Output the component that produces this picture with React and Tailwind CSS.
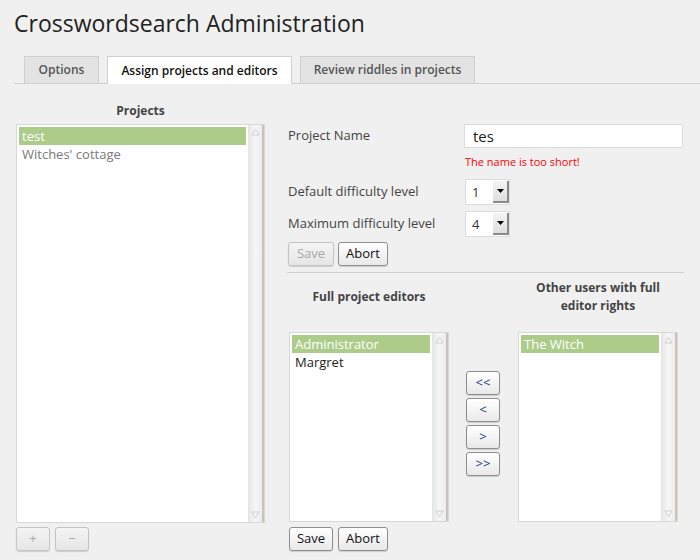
import React from "react";

const font = { fontFamily: '"Open Sans", "Liberation Sans", sans-serif' };

function Scrollbar() {
  return (
    <div className="flex w-[16px] shrink-0 flex-col items-center justify-between border-l border-[#e4e4e4] border-r-2 border-r-[#c8c4bc] bg-gradient-to-r from-[#e8e8e8] via-[#f6f6f6] to-[#ececec] py-[3px]">
      <svg width="9" height="8" viewBox="0 0 9 8"><path d="M4.5 1 L8 7 L1 7 Z" fill="none" stroke="#d0d0d0" strokeWidth="1" /></svg>
      <svg width="9" height="8" viewBox="0 0 9 8"><path d="M1 1 L8 1 L4.5 7 Z" fill="none" stroke="#d0d0d0" strokeWidth="1" /></svg>
    </div>
  );
}

function ListBox({ items, className }) {
  return (
    <div className={"flex border border-[#d8d8d8] bg-white " + className}>
      <div className="flex-1 p-[2px]">
        {items.map((it, i) => (
          <div
            key={i}
            className={
              "h-[18px] pl-[3px] text-[13px] leading-[18px] " +
              (it.sel ? "bg-[#adcc8a] text-white" : it.gray ? "text-[#7a7a7a]" : "text-[#222]")
            }
          >
            {it.t}
          </div>
        ))}
      </div>
      <Scrollbar />
    </div>
  );
}

function Btn({ children, disabled, className = "" }) {
  return (
    <div
      className={
        "flex h-[24px] items-center justify-center rounded-[3px] border text-[13px] shadow-[0_1px_1px_rgba(0,0,0,0.15)] " +
        (disabled
          ? "border-[#c4c4c4] bg-gradient-to-b from-[#f4f4f4] to-[#e6e6e6] text-[#a8a8a8]"
          : "border-[#8e8e8e] bg-gradient-to-b from-white to-[#e9e9e9] text-[#111]") +
        " " +
        className
      }
    >
      {children}
    </div>
  );
}

function Select({ value }) {
  return (
    <div className="flex h-[26px] w-[45px] border border-[#dcdcdc] bg-white">
      <div className="flex-1 pl-[6px] text-[13px] leading-[24px] text-[#333]">{value}</div>
      <div className="mt-[1px] flex h-[22px] w-[16px] items-center justify-center border-r-2 border-b-2 border-[#8a8a8a] bg-gradient-to-b from-[#f4f4f4] to-[#dedede]">
        <svg width="7" height="4" viewBox="0 0 7 4"><path d="M0 0 L7 0 L3.5 4 Z" fill="#000" /></svg>
      </div>
    </div>
  );
}

export default function App() {
  return (
    <div className="h-[560px] w-[700px] overflow-hidden bg-[#f0f0f0] text-[#333]" style={font}>
      <div className="pl-[14px] pt-[6px]">
        <h1 className="text-[23px] leading-[34px] text-[#222]">Crosswordsearch Administration</h1>
      </div>
      <div className="ml-[14px] mt-[16px] flex h-[28px] items-end gap-[8px] border-b border-[#cfcfcf] pl-[10px]">
        <div className="flex h-[27px] w-[75px] items-center justify-center border border-b-0 border-[#cfcfcf] bg-[#e3e3e3] text-[12px] font-semibold text-[#555]">
          Options
        </div>
        <div className="-mb-px flex h-[28px] w-[185px] items-center justify-center border border-b-0 border-[#cfcfcf] bg-white text-[12px] font-semibold text-[#111]">
          Assign projects and editors
        </div>
        <div className="flex h-[27px] w-[175px] items-center justify-center border border-b-0 border-[#cfcfcf] bg-[#e3e3e3] text-[12px] font-semibold text-[#555]">
          Review riddles in projects
        </div>
      </div>

      <div className="mt-[17px] flex pl-[16px]">
        <div className="flex w-[249px] flex-col">
          <div className="h-[23px] text-center text-[12px] font-bold leading-[20px] text-[#444]">Projects</div>
          <ListBox
            className="h-[399px]"
            items={[{ t: "test", sel: true }, { t: "Witches' cottage", gray: true }]}
          />
          <div className="mt-[4px] flex gap-[5px]">
            <Btn disabled className="w-[34px]">+</Btn>
            <Btn disabled className="w-[34px]">−</Btn>
          </div>
        </div>

        <div className="ml-[22px] flex w-[397px] flex-col">
          <div className="flex items-center pt-[23px]">
            <div className="w-[177px] pl-[1px] text-[13px] text-[#444]">Project Name</div>
            <div className="flex h-[24px] w-[219px] items-center border border-[#dcdcdc] bg-white pl-[8px] text-[15px] text-[#222]">
              tes
            </div>
          </div>
          <div className="mt-[7px] pl-[178px] text-[11px] leading-[14px] text-[#ff0000]">The name is too short!</div>
          <div className="mt-[10px] flex items-center">
            <div className="w-[178px] pl-[1px] text-[13px] text-[#444]">Default difficulty level</div>
            <Select value="1" />
          </div>
          <div className="mt-[6px] flex items-center">
            <div className="w-[178px] pl-[1px] text-[13px] text-[#444]">Maximum difficulty level</div>
            <Select value="4" />
          </div>
          <div className="mt-[5px] flex gap-[4px] pl-[1px]">
            <Btn disabled className="w-[46px]">Save</Btn>
            <Btn className="w-[50px]">Abort</Btn>
          </div>
          <div className="mt-[6px] h-px w-[397px] bg-[#d0d0d0]" />

          <div className="mt-[6px] flex pl-[2px]">
            <div className="flex h-[36px] w-[160px] items-center justify-center text-[12px] font-bold leading-[18px] text-[#444]">
              Full project editors
            </div>
            <div className="w-[69px]" />
            <div className="flex h-[36px] w-[160px] items-center justify-center text-center text-[12px] font-bold leading-[18px] text-[#444]">
              Other users with full<br />editor rights
            </div>
          </div>
          <div className="mt-[17px] flex pl-[2px]">
            <ListBox
              className="h-[190px] w-[160px]"
              items={[{ t: "Administrator", sel: true }, { t: "Margret" }]}
            />
            <div className="flex w-[69px] flex-col items-center pt-[39px] pr-[1px]">
              <Btn className="h-[23px] w-[34px] text-[#233a7a]">&lt;&lt;</Btn>
              <Btn className="mt-[3px] h-[23px] w-[34px] text-[#233a7a]">&lt;</Btn>
              <Btn className="mt-[3px] h-[23px] w-[34px] text-[#233a7a]">&gt;</Btn>
              <Btn className="mt-[3px] h-[23px] w-[34px] text-[#233a7a]">&gt;&gt;</Btn>
            </div>
            <ListBox className="h-[190px] w-[160px]" items={[{ t: "The Witch", sel: true }]} />
          </div>
          <div className="mt-[5px] flex gap-[5px] pl-[2px]">
            <Btn className="w-[44px]">Save</Btn>
            <Btn className="w-[50px]">Abort</Btn>
          </div>
        </div>
      </div>
    </div>
  );
}
